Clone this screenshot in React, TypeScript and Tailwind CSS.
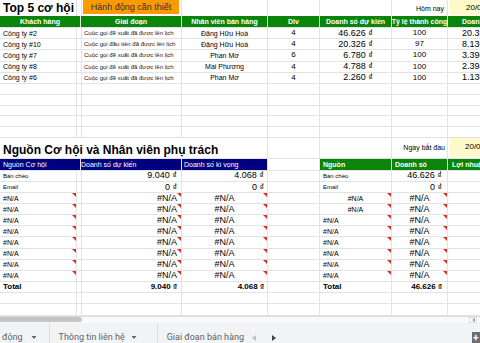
import type { ReactNode } from "react";
import clsx from "clsx";

const GRID = "grid grid-cols-[77px_4px_101px_86px_52px_72px_56px_80px]";

type CellProps = {
  children?: ReactNode;
  className?: string;
  err?: boolean;
};

function Cell({ children, className, err }: CellProps) {
  return (
    <div
      className={clsx(
        "relative flex items-center whitespace-nowrap border-b border-r border-[#e2e3e3] px-[2px] leading-none",
        className,
      )}
    >
      {children}
      {err ? (
        <span className="absolute right-0 top-0 h-0 w-0 border-l-[4px] border-t-[4px] border-l-transparent border-t-[#d93025]" />
      ) : null}
    </div>
  );
}

const topRows = [
  ["Công ty #2", "Cuộc gọi đề xuất đã được lên lịch", "Đặng Hữu Hoà", "4", "46.626 ₫", "100", "20.338 ₫"],
  ["Công ty #10", "Cuộc gọi đầu tiên đã được lên lịch", "Đặng Hữu Hoà", "4", "20.326 ₫", "97", "8.130 ₫"],
  ["Công ty #7", "Cuộc gọi đề xuất đã được lên lịch", "Phan Mơ", "6", "6.780 ₫", "100", "3.390 ₫"],
  ["Công ty #8", "Cuộc gọi đề xuất đã được lên lịch", "Mai Phương", "4", "4.788 ₫", "100", "2.394 ₫"],
  ["Công ty #6", "Cuộc gọi đề xuất đã được lên lịch", "Phan Mơ", "4", "2.260 ₫", "100", "1.130 ₫"],
];

function EmptyRow({ h }: { h: string }) {
  return (
    <div className={clsx(GRID, h)}>
      {Array.from({ length: 8 }).map((_, i) => (
        <Cell key={i} />
      ))}
    </div>
  );
}

function NaRow({ centered }: { centered: boolean }) {
  return (
    <div className={clsx(GRID, "h-[11.1px]")}>
      <Cell className="pl-[3px] text-[7px]" err>
        #N/A
      </Cell>
      <Cell />
      <Cell className="justify-end pr-[4px] text-[9px]" err>
        #N/A
      </Cell>
      <Cell className="justify-center text-[9px]" err>
        #N/A
      </Cell>
      <Cell />
      {centered ? (
        <Cell className="justify-center text-[7px]" err>
          #N/A
        </Cell>
      ) : (
        <Cell className="pl-[3px] text-[7px]" err>
          #N/A
        </Cell>
      )}
      <Cell className="justify-center text-[9px]" err>
        #N/A
      </Cell>
      <Cell />
    </div>
  );
}

function Caret({ className }: { className?: string }) {
  return (
    <svg viewBox="0 0 8 5" className={clsx("h-[3px] w-[6px]", className)}>
      <path d="M0 0h8L4 5z" fill="currentColor" />
    </svg>
  );
}

export default function App() {
  return (
    <div className="h-[343px] w-[480px] overflow-hidden bg-white font-['Liberation_Sans',Arial,sans-serif] text-black">
      <div className="w-[480px] overflow-hidden">
        {/* title row */}
        <div className={clsx(GRID, "h-[16px]")}>
          <Cell className="border-b-0 pl-[3px] text-[12px] font-bold">Top 5 cơ hội</Cell>
          <Cell className="border-b-0" />
          <Cell className="items-start border-b-0 p-0">
            <div className="flex h-[14px] w-full items-center justify-center bg-[#ff9900] text-[9px] text-[#333]">
              Hành động cần thiết
            </div>
          </Cell>
          <Cell className="border-b-0" />
          <Cell className="border-b-0" />
          <Cell className="border-b-0" />
          <Cell className="justify-end border-b-0 pr-[3px] text-[7px]">Hôm nay</Cell>
          <Cell className="items-start border-b-0 p-0">
            <div className="flex h-[15px] w-full items-center bg-[#fff8c8] pl-[16px] text-[8px]">
              20/03/2024
            </div>
          </Cell>
        </div>

        {/* green header */}
        <div className={clsx(GRID, "h-[12px] bg-[#0a850a] text-[7px] font-bold text-white")}>
          <Cell className="col-span-2 justify-center border-[#0a850a]">Khách hàng</Cell>
          <Cell className="justify-center border-[#0a850a]">Giai đoạn</Cell>
          <Cell className="justify-center border-[#0a850a]">Nhân viên bán hàng</Cell>
          <Cell className="justify-center border-[#0a850a]">Div</Cell>
          <Cell className="justify-center border-[#0a850a]">Doanh số dự kiến</Cell>
          <Cell className="justify-center border-[#0a850a]">Tỷ lệ thành công</Cell>
          <Cell className="border-[#0a850a] pl-[14px]">Doanh số kì vọng</Cell>
        </div>

        {topRows.map((r) => (
          <div key={r[0]} className={clsx(GRID, "h-[11.2px]")}>
            <Cell className="pl-[3px] text-[7px]">{r[0]}</Cell>
            <Cell />
            <Cell className="pl-[3px] text-[6px] text-[#222]">{r[1]}</Cell>
            <Cell className="justify-center text-[7px]">{r[2]}</Cell>
            <Cell className="justify-center text-[8px]">{r[3]}</Cell>
            <Cell className="justify-end pr-[18px] text-[9px]">{r[4]}</Cell>
            <Cell className="justify-center text-[8px]">{r[5]}</Cell>
            <Cell className="pl-[14px] text-[9px]">{r[6]}</Cell>
          </div>
        ))}

        {[0, 1, 2, 3, 4].map((i) => (
          <EmptyRow key={i} h="h-[10.8px]" />
        ))}

        {/* second title row */}
        <div className={clsx(GRID, "h-[21px]")}>
          <Cell className="col-span-4 items-end pb-[2px] pl-[3px] text-[12px] font-bold">
            Nguồn Cơ hội và Nhân viên phụ trách
          </Cell>
          <Cell />
          <Cell />
          <Cell className="justify-end pr-[2px] text-[7px]">Ngày bắt đầu</Cell>
          <Cell className="items-start p-0">
            <div className="flex h-[19px] w-full items-center bg-[#fff8c8] pl-[15px] text-[8px]">
              20/01/2024
            </div>
          </Cell>
        </div>

        {/* blue + green header */}
        <div className={clsx(GRID, "h-[12px] text-[7px] text-white")}>
          <Cell className="col-span-2 border-[#000080] bg-[#000080] pl-[3px]">Nguồn Cơ hội</Cell>
          <Cell className="border-[#000080] bg-[#000080] pl-0">Doanh số dự kiến</Cell>
          <Cell className="border-[#000080] bg-[#000080] pl-[2px]">Doanh số kì vọng</Cell>
          <Cell />
          <Cell className="border-[#0a850a] bg-[#0a850a] pl-[3px] font-bold">Nguồn</Cell>
          <Cell className="border-[#0a850a] bg-[#0a850a] pl-[3px] font-bold">Doanh số</Cell>
          <Cell className="border-[#0a850a] bg-[#0a850a] pl-[4px] font-bold">Lợi nhuận</Cell>
        </div>

        <div className={clsx(GRID, "h-[11.1px]")}>
          <Cell className="pl-[3px] text-[6px]">Bán chéo</Cell>
          <Cell />
          <Cell className="justify-end pr-[4px] text-[9px]">9.040 ₫</Cell>
          <Cell className="justify-end pr-[3px] text-[9px]">4.068 ₫</Cell>
          <Cell />
          <Cell className="pl-[3px] text-[6px]">Bán chéo</Cell>
          <Cell className="justify-end pr-[5px] text-[9px]">46.626 ₫</Cell>
          <Cell />
        </div>
        <div className={clsx(GRID, "h-[11.1px]")}>
          <Cell className="pl-[3px] text-[6px]">Email</Cell>
          <Cell />
          <Cell className="justify-end pr-[4px] text-[9px]">0 ₫</Cell>
          <Cell className="justify-end pr-[3px] text-[9px]">0 ₫</Cell>
          <Cell />
          <Cell className="pl-[3px] text-[6px]">Email</Cell>
          <Cell className="justify-end pr-[5px] text-[9px]">0 ₫</Cell>
          <Cell />
        </div>
        {[0, 1, 2, 3, 4, 5, 6, 7].map((i) => (
          <NaRow key={i} centered={i < 2} />
        ))}
        <div className={clsx(GRID, "h-[11.1px] font-bold")}>
          <Cell className="pl-[3px] text-[8px]">Total</Cell>
          <Cell />
          <Cell className="justify-end pr-[4px] text-[8px]">9.040 ₫</Cell>
          <Cell className="justify-end pr-[3px] text-[8px]">4.068 ₫</Cell>
          <Cell />
          <Cell className="pl-[3px] text-[8px]">Total</Cell>
          <Cell className="justify-end pr-[5px] text-[8px]">46.626 ₫</Cell>
          <Cell />
        </div>
        <EmptyRow h="h-[11.45px]" />
        <EmptyRow h="h-[11.45px]" />
      </div>

      {/* horizontal scrollbar */}
      <div className="flex h-[7px] items-center border-t border-[#dadce0] bg-[#f8f9fa]">
        <div className="h-[5px] w-[82px] rounded-r-full bg-[#c4c4c4]" />
        <div className="ml-auto mr-[3px] flex h-[6px] w-[8px] items-center justify-center border border-[#dadce0] bg-white">
          <svg viewBox="0 0 4 6" className="h-[4px] w-[3px] text-[#888]">
            <path d="M4 0v6L0 3z" fill="currentColor" />
          </svg>
        </div>
      </div>

      {/* sheet tabs */}
      <div className="flex h-[30px] items-center bg-[#f1f3f4] font-['Roboto',sans-serif] text-[9px] text-[#5f6368]">
        <div className="flex h-full w-[245px] items-center overflow-hidden">
          <div className="flex h-full shrink-0 items-center gap-[8px] pl-[2px] pr-[12px]">
            động <Caret />
          </div>
          <div className="h-full w-px shrink-0 bg-[#dadce0]" />
          <div className="flex h-full shrink-0 items-center gap-[6px] pl-[9px] pr-[20px]">
            Thông tin liên hệ <Caret />
          </div>
          <div className="h-full w-px shrink-0 bg-[#dadce0]" />
          <div className="flex h-full shrink-0 items-center pl-[9px]">Giai đoạn bán hàng</div>
        </div>
        <svg viewBox="0 0 4 6" className="ml-[7px] h-[6px] w-[4px] text-[#c0c0c0]">
          <path d="M4 0v6L0 3z" fill="currentColor" />
        </svg>
        <svg viewBox="0 0 4 6" className="ml-[16px] h-[6px] w-[4px] text-[#444]">
          <path d="M0 0v6l4-3z" fill="currentColor" />
        </svg>
        <div className="ml-auto flex h-[20px] w-[8px] items-start self-start overflow-hidden bg-[#6b6e72] pl-[1px] pt-[1px] text-[10px] font-bold leading-none text-white mt-[9px]">
          +
        </div>
      </div>
    </div>
  );
}
